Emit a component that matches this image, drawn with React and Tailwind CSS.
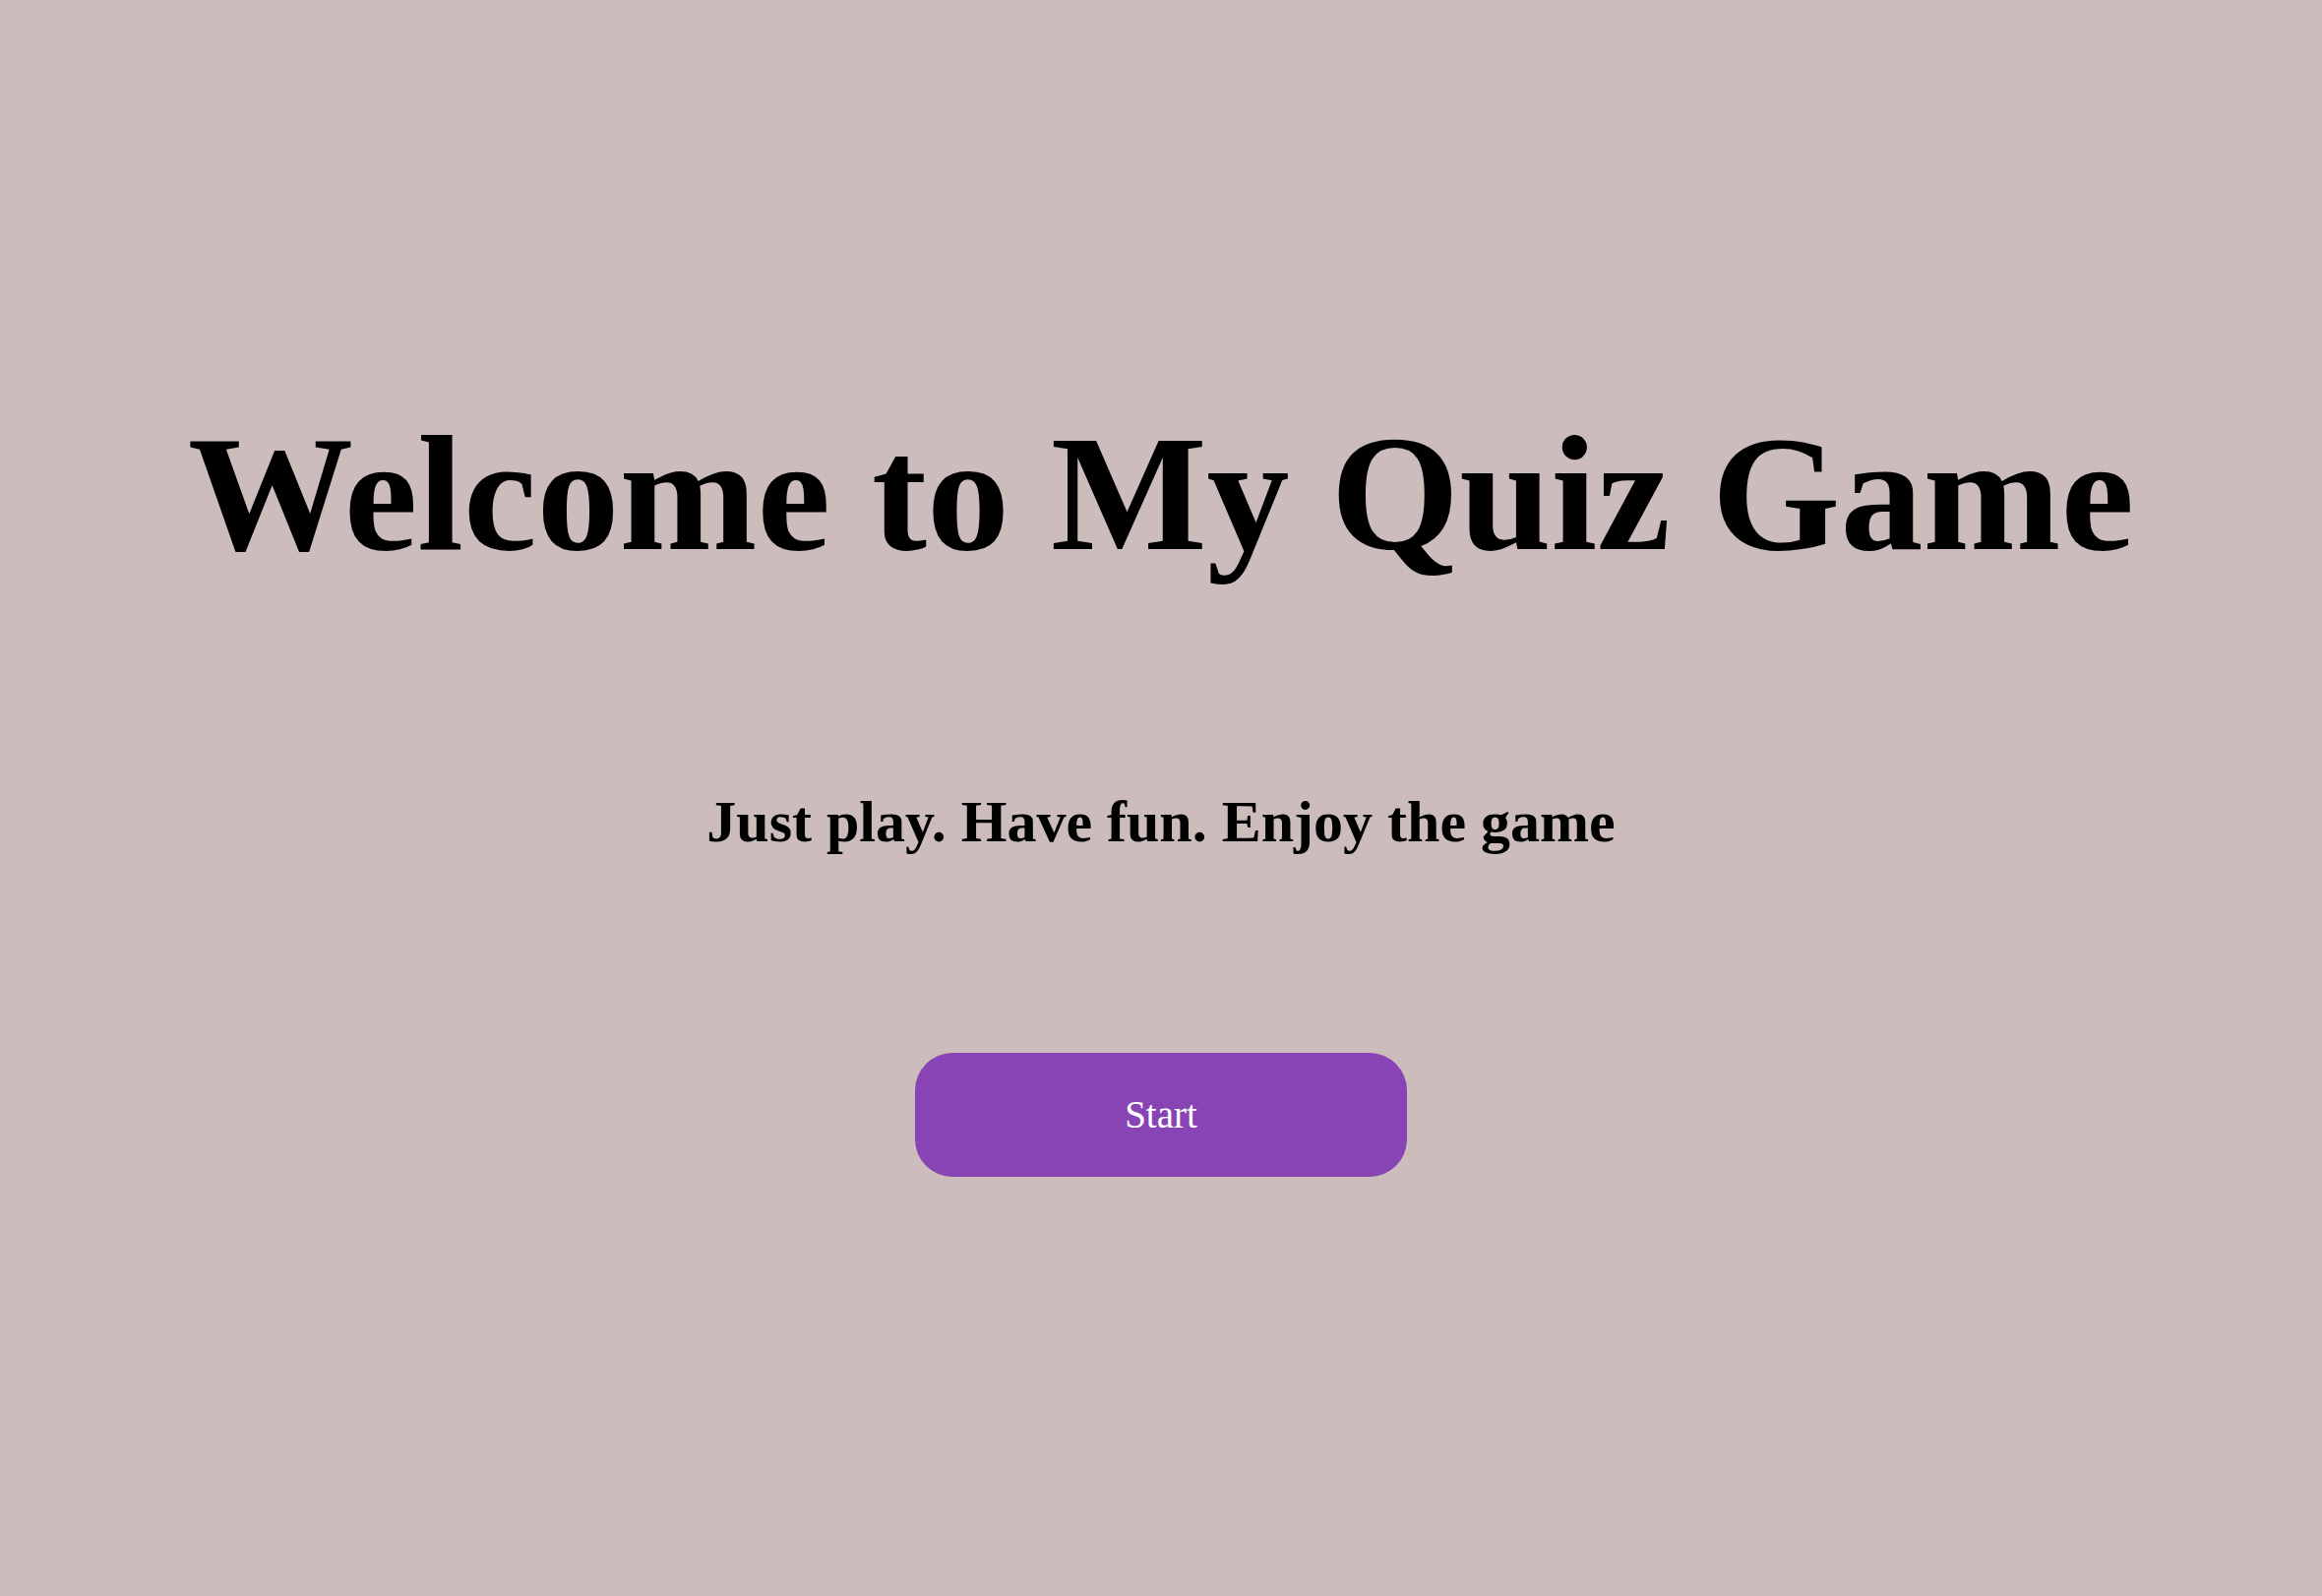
export default function App() {
  return (
    <div className="min-h-screen w-full bg-[#ccbcbc] flex flex-col items-center font-['Liberation_Serif','Times_New_Roman',serif] text-black">
      <h1 className="mt-[408px] text-[168px] leading-[186px] font-bold whitespace-nowrap">Welcome to My Quiz Game</h1>
      <h2 className="mt-[208px] text-[60px] leading-[66px] font-bold whitespace-nowrap">Just play. Have fun. Enjoy the game</h2>
      <button className="mt-[202px] w-[500px] h-[126px] rounded-[38px] bg-[#8843b5] text-white text-[39px] flex items-center justify-center">Start</button>
    </div>
  );
}
